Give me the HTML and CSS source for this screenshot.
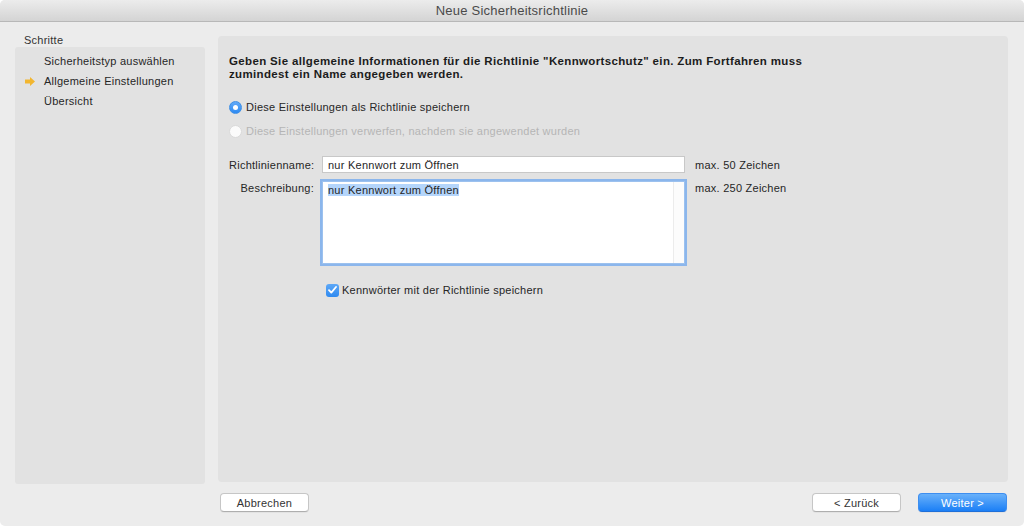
FILE: index.html
```html
<!DOCTYPE html>
<html lang="de">
  <head>
    <meta charset="UTF-8" />
    <title>Neue Sicherheitsrichtlinie</title>
    <link rel="stylesheet" href="styles.css">
  </head>
  <body>
    <div class="window">
      <div class="titlebar">Neue Sicherheitsrichtlinie</div>

      <div class="main">
        <div class="sidebar">
          <div class="sidebar-title">Schritte</div>
          <ul class="steps">
            <li>Sicherheitstyp auswählen</li>
            <li class="current">
              <svg class="arrow" width="10" height="9" viewBox="0 0 10 9">
                <path d="M0 2.5h5V0l5 4.5L5 9V6.5H0z" fill="#f2b630" />
              </svg>
              Allgemeine Einstellungen
            </li>
            <li>Übersicht</li>
          </ul>
        </div>

        <div class="panel">
          <p class="intro">
            Geben Sie allgemeine Informationen für die Richtlinie "Kennwortschutz" ein. Zum Fortfahren muss
            zumindest ein Name angegeben werden.
          </p>

          <div class="radio-row">
            <span class="radio on"></span>
            Diese Einstellungen als Richtlinie speichern
          </div>
          <div class="radio-row disabled">
            <span class="radio"></span>
            Diese Einstellungen verwerfen, nachdem sie angewendet wurden
          </div>

          <div class="form">
            <label class="lbl">Richtlinienname:</label>
            <div class="input">nur Kennwort zum Öffnen</div>
            <span class="hint">max. 50 Zeichen</span>

            <label class="lbl lbl-top">Beschreibung:</label>
            <div class="textarea">
              <div class="text"><span class="sel">nur Kennwort zum Öffnen</span></div>
              <div class="scroll"></div>
            </div>
            <span class="hint hint-top">max. 250 Zeichen</span>

            <div class="check-row">
              <span class="checkbox">
                <svg width="9" height="8" viewBox="0 0 9 8">
                  <path d="M1 4.2l2.3 2.4L8 1" fill="none" stroke="#fff" stroke-width="1.8" stroke-linecap="round" stroke-linejoin="round" />
                </svg>
              </span>
              Kennwörter mit der Richtlinie speichern
            </div>
          </div>
        </div>

        <div class="footer">
          <button class="btn">Abbrechen</button>
          <div class="nav">
            <button class="btn">&lt; Zurück</button>
            <button class="btn primary">Weiter &gt;</button>
          </div>
        </div>
      </div>
    </div>
  </body>
</html>
```

FILE: styles.css
```css
body {
  margin: 0;
  background: #ffffff;
  font-family: "Liberation Sans", Arial, sans-serif;
  font-size: 11px;
  letter-spacing: 0.25px;
  color: #262626;
}
.window {
  width: 1024px;
  height: 526px;
  background: #ececec;
  border-radius: 5px;
  overflow: hidden;
  display: flex;
  flex-direction: column;
}
.titlebar {
  height: 21px;
  line-height: 21px;
  text-align: center;
  font-size: 13px;
  letter-spacing: 0.23px;
  color: #4a4a4a;
  background: linear-gradient(#ececec, #d4d4d4);
  border-bottom: 1px solid #b8b8b8;
  flex-shrink: 0;
}

/* main area */
.main {
  flex: 1;
  display: grid;
  grid-template-columns: 190px 1fr;
  grid-template-rows: 1fr 42px;
  column-gap: 13px;
  padding: 12px 16px 0 15px;
}
.sidebar {
  display: flex;
  flex-direction: column;
}
.sidebar-title {
  height: 13px;
  line-height: 12px;
  padding-left: 9px;
  color: #333;
}
.steps {
  flex: 1;
  list-style: none;
  margin: 0;
  padding: 4px 0 0 29px;
  background: #e2e2e2;
  border-radius: 3px;
}
.steps li {
  height: 20px;
  line-height: 20px;
  position: relative;
}
.steps .arrow {
  position: absolute;
  left: -19px;
  top: 6px;
}
.panel {
  margin: 2px 0 2px;
  background: #e2e2e2;
  border-radius: 4px;
  padding: 19px 11px 0;
}
.intro {
  margin: 0;
  max-width: 575px;
  font-size: 11.5px;
  font-weight: bold;
  letter-spacing: 0.35px;
  line-height: 13px;
  color: #1c1c1c;
}

/* radios */
.radio-row {
  display: flex;
  align-items: center;
  gap: 4px;
  height: 16px;
  margin-top: 8px;
}
.intro + .radio-row {
  margin-top: 18px;
}
.radio-row.disabled {
  color: #b5b5b5;
}
.radio {
  width: 13px;
  height: 13px;
  border-radius: 50%;
  box-sizing: border-box;
  background: #fbfbfb;
  border: 1px solid #dadada;
  position: relative;
}
.radio.on {
  background: linear-gradient(#62aaf8, #2d8af2);
  border-color: #3e8fe6;
}
.radio.on::after {
  content: "";
  position: absolute;
  left: 3px;
  top: 3px;
  width: 5px;
  height: 5px;
  border-radius: 50%;
  background: #fff;
}

/* form */
.form {
  display: grid;
  grid-template-columns: 85px 363px auto;
  column-gap: 8px;
  row-gap: 8px;
  margin-top: 17px;
  align-items: center;
}
.lbl {
  text-align: right;
  color: #262626;
}
.lbl-top,
.hint-top {
  align-self: start;
  margin-top: 1px;
}
.hint {
  margin-left: 2px;
}
.input {
  height: 17px;
  line-height: 16px;
  box-sizing: border-box;
  padding: 0 5px;
  background: #fff;
  border: 1px solid #c8c8c8;
}
.textarea {
  height: 83px;
  box-sizing: border-box;
  background: #fff;
  border: 1px solid #9cc1ee;
  box-shadow: 0 0 0 2px #8bb6ec;
  display: flex;
}
.textarea .text {
  flex: 1;
  padding: 1px 5px;
  line-height: 14px;
}
.sel {
  background: #b4d5fb;
}
.textarea .scroll {
  width: 10px;
  border-left: 1px solid #ececec;
  background: #fcfcfc;
}
.check-row {
  grid-column: 2 / 4;
  display: flex;
  align-items: center;
  gap: 3px;
  margin-top: 11px;
  padding-left: 4px;
  height: 14px;
}
.checkbox {
  width: 13px;
  height: 13px;
  border-radius: 3px;
  background: linear-gradient(#5ea8f7, #2f8af0);
  display: flex;
  align-items: center;
  justify-content: center;
}

/* footer */
.footer {
  grid-column: 2;
  display: flex;
  justify-content: space-between;
  align-items: flex-start;
  padding: 9px 1px 0 2px;
}
.nav {
  display: flex;
  gap: 17px;
}
.btn {
  width: 89px;
  height: 19px;
  padding: 0;
  font-family: "Liberation Sans", Arial, sans-serif;
  font-size: 11px;
  letter-spacing: 0.25px;
  color: #333;
  background: #fff;
  border: 1px solid #c6c6c6;
  border-bottom-color: #aeaeae;
  border-radius: 4px;
  box-shadow: 0 1px 0 rgba(0, 0, 0, 0.04);
}
.btn.primary {
  color: #fff;
  background: linear-gradient(#69b1fa, #1b7ff6);
  border-color: #3d8ef0;
  border-bottom-color: #1f6fd8;
}
```
